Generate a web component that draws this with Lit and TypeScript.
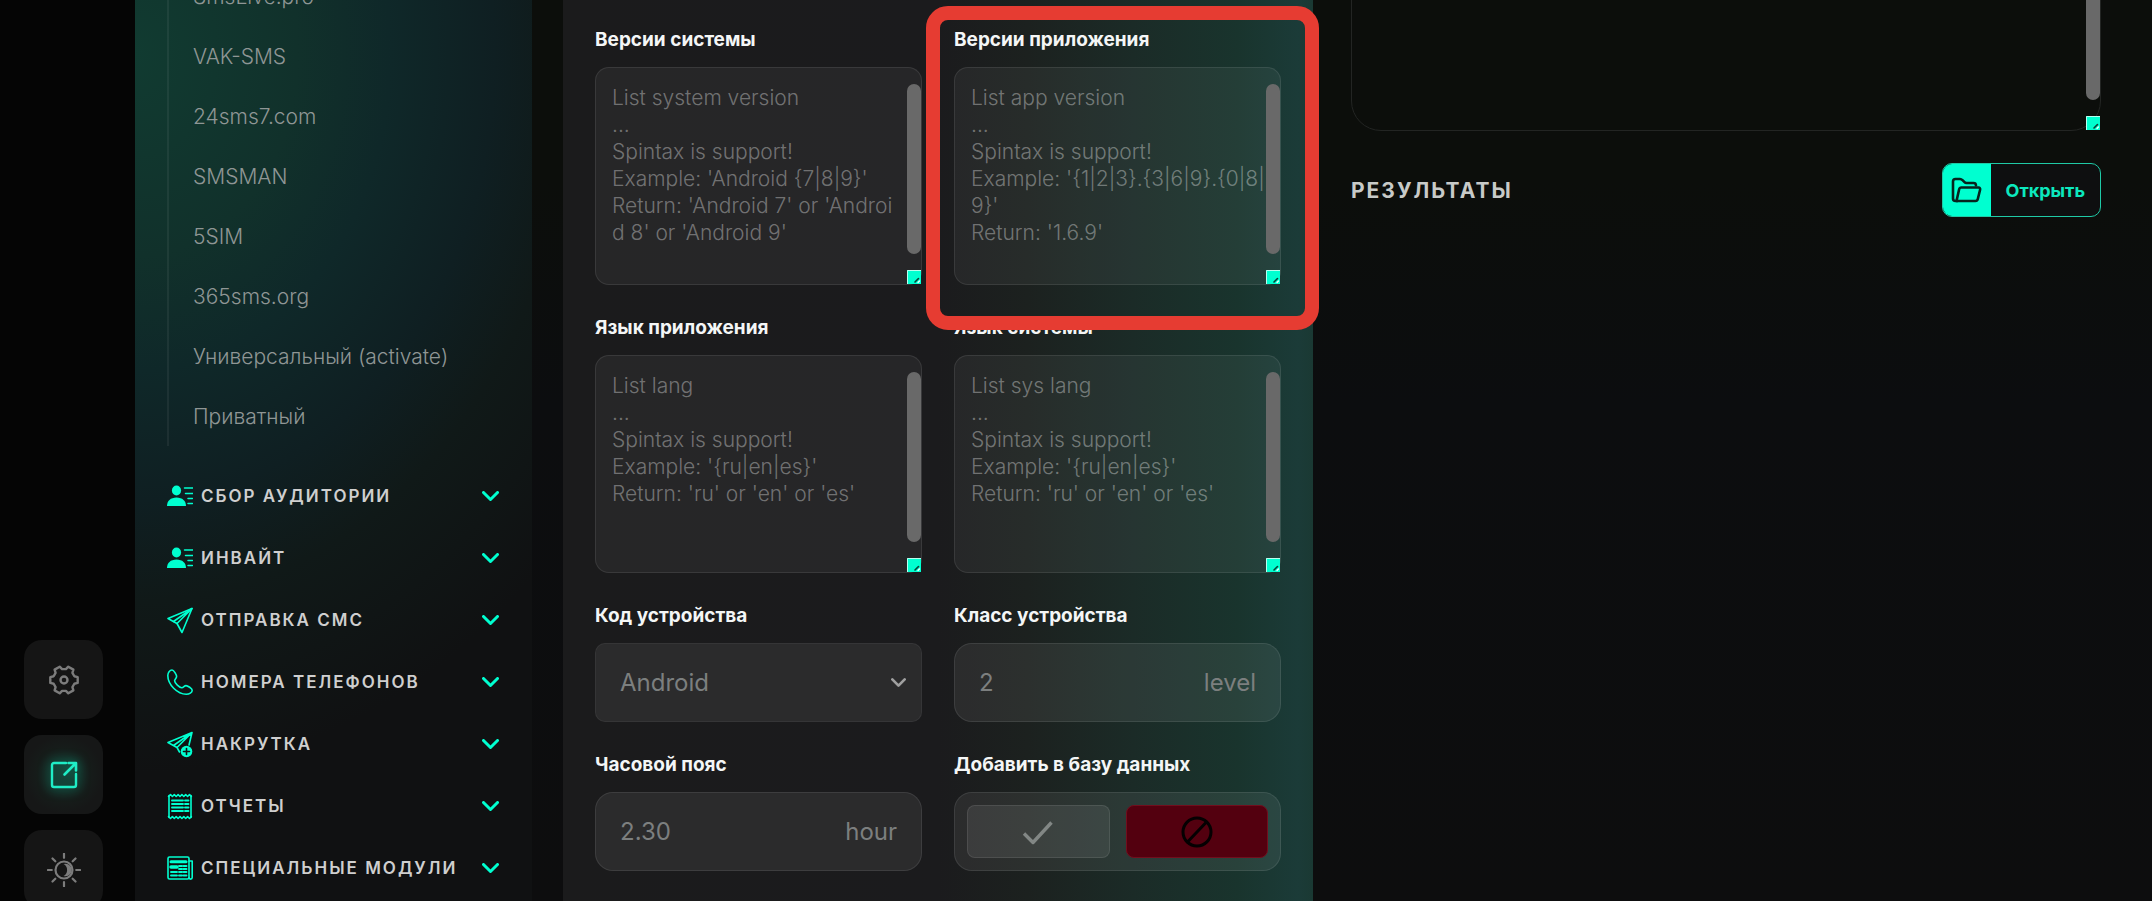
import { LitElement, html, css, svg, nothing } from "lit";
import { customElement, property } from "lit/decorators.js";
import { classMap } from "lit/directives/class-map.js";

const gearPath = (() => {
  const at = (deg: number, r: number) => {
    const a = (deg * Math.PI) / 180;
    return `${(16 + r * Math.cos(a)).toFixed(2)} ${(16 + r * Math.sin(a)).toFixed(2)}`;
  };
  let d = "";
  for (let i = 0; i < 6; i++) {
    const a = i * 60;
    d += `${i ? "L" : "M"}${at(a - 12, 14)}L${at(a + 12, 14)}L${at(a + 20, 11)}L${at(a + 40, 11)}`;
  }
  return d + "Z";
})();

const plane = svg`<path d="M25 1.5 1 11.5l9 5 5 9z"/><path d="M25 1.5 10 16.5M25 1.5 6.500 14.500"/>`;

const icons = {
  contact: svg`<g fill="currentColor" stroke="none"><ellipse cx="9.500" cy="7.500" rx="4.600" ry="5"/><path d="M0 23c0-5 3.500-8.500 9.500-8.500S19 18 19 23z"/></g><path d="M17.500 5H26M18.500 10.500H26M21 15.500h4.500M21 20.500h4.500" stroke-width="1.500"/>`,
  plane,
  phone: svg`<path d="M5 1C2.800 1 .800 3.600.800 6.500c0 9 9.500 18.700 18.500 18.700 3 0 5.900-1.700 5.900-4 0-1.700-4.700-4.600-6.200-4.600-1.700 0-2.500 2.200-4.200 2.200-2.300 0-7.200-4.800-7.200-7 0-1.700 2-2.600 2-4.300C9.600 5.900 6.800 1 5 1z"/>`,
  planePlus: svg`<path d="M25 1.500 1 11.500l9 5 2.500 4.500M25 1.500 22 14M25 1.500 10 16.500M25 1.500 6.500 14.500"/><circle cx="19.500" cy="20.500" r="5.800" fill="currentColor" stroke="none"/><path d="M19.500 17.500v6M16.500 20.500h6" stroke="#101113" stroke-width="1.600"/>`,
  report: svg`<path d="M2 2.500v22M24 2.500v22"/><path d="M1.500 3.500l2-2 1.900 2 1.900-2 1.900 2 1.900-2 1.900 2 1.900-2 1.900 2 1.900-2 1.900 2 1.900-2 1.900 2M1.500 23.500l2 2 1.900-2 1.900 2 1.900-2 1.900 2 1.900-2 1.900 2 1.900-2 1.900 2 1.900-2 1.900 2 1.900-2"/><path d="M5 7.500h11M5 11h11M5 14.500h11M5 18h11M18 7.500h3.500M18 11h3.500M18 14.500h3.500M18 18h3.500" stroke-width="1.900"/>`,
  news: svg`<rect x="1" y="2" width="21" height="22" rx="1.500"/><path d="M22 6h3.200v16.500a1.500 1.500 0 0 1-3.200 0"/><path d="M4 6.800h15" stroke-width="3"/><path d="M4 12h6" stroke-width="3.500"/><path d="M12 11h3M16.500 11h3M12 14h3M16.500 14h3M4 17h6M12 17h3M16.500 17h3M4 20.500h6M12 20.500h3M16.500 20.500h3" stroke-width="1.900"/>`,
  gear: svg`<path d=${gearPath} stroke-width="2.400"/><circle cx="16" cy="16" r="3.500" stroke-width="2.400"/>`,
  external: svg`<path d="M18 4H6a2 2 0 0 0-2 2v20a2 2 0 0 0 2 2h20a2 2 0 0 0 2-2V15" stroke-width="2.400"/><path d="M16.500 15.500 26 6M20.500 4H28v7.500" stroke-width="2.600"/>`,
  sun: svg`<circle cx="17" cy="17" r="8.500" stroke-width="2.200"/><path d="M16.500 11a6.300 6.300 0 1 1 0 12 6.800 6.800 0 0 0 0-12z" fill="currentColor" stroke="none"/><path d="M17 .800v4M17 29.200v4M.800 17h4M29.200 17h4M5.500 5.500l2.800 2.800M25.700 25.700l2.800 2.800M5.500 28.500l2.800-2.800M25.700 8.300l2.800-2.800" stroke-width="2.200"/>`,
  chevron: svg`<path d="M1.500 1.500 8.500 8.500l7-7" stroke-width="3"/>`,
  check: svg`<path d="M2 14.500 11 23.500 29.500 3.500" stroke-width="3.400" stroke-linecap="butt"/>`,
  ban: svg`<circle cx="16" cy="16" r="14" stroke-width="3"/><path d="M6.500 26 25.500 6" stroke-width="3"/>`,
  folder: svg`<path d="M6.500 24H4.500A2.500 2.500 0 0 1 2 21.500V4.500A2.500 2.500 0 0 1 4.500 2H9c1 0 1.800.500 2.500 1.200l2 2c.500.500 1.200.800 2 .800h7a2.500 2.500 0 0 1 2.500 2.300" stroke-width="2.600"/><path d="M10 10.500h17.500c1.300 0 1.900 1 1.600 2.200l-2.300 9.300a2.500 2.500 0 0 1-2.500 2H5.500l2.700-12c.200-.900.900-1.500 1.800-1.500z" stroke-width="2.600"/>`,
  grip: svg`<path d="M.500 14V.500H14" stroke="#b8fff0" stroke-width="1"/><path d="M8 12l3.500-3.500" stroke="#0a3b33" stroke-width="1.600"/><path d="M11 12.500l1.500-1.500" stroke="#fff" stroke-width="1.200"/>`,
};
type IconName = keyof typeof icons;

const icon = (name: IconName, w: number, h: number, cls = "") => html`
  <svg class=${cls} viewBox="0 0 ${w} ${h}" width=${w} height=${h} fill="none" stroke="currentColor"
    stroke-width="1.600" stroke-linecap="round" stroke-linejoin="round" aria-hidden="true">${icons[name]}</svg>`;

const base = css`
  *, *::before, *::after { box-sizing: border-box; }
  svg { display: block; flex: none; }
  button { font: inherit; color: inherit; border: 0; background: none; padding: 0; margin: 0; cursor: pointer; }
`;

@customElement("tool-rail")
class ToolRail extends LitElement {
  static styles = [base, css`
    :host { display: block; background: #050505; }
    .rail { height: calc(100% + 8px); display: flex; flex-direction: column; justify-content: flex-end; gap: 16px; padding: 0 24px; }
    .tool { flex: none; width: 79px; height: 79px; border-radius: 18px; background: #151515; color: #7c7c7c; display: grid; place-items: center; }
    .active { color: #1fedc6; background: radial-gradient(circle, #16382f 0, #161c1a 48%, #161717 70%); }
    .active svg { filter: drop-shadow(0 0 6px rgb(0 255 200 / 55%)); }
  `];
  render() {
    return html`<nav class="rail" aria-label="Инструменты">
      <button class="tool" aria-label="Настройки">${icon("gear", 32, 32)}</button>
      <button class="tool active" aria-label="Открыть в окне">${icon("external", 32, 32)}</button>
      <button class="tool" aria-label="Тема">${icon("sun", 34, 34)}</button>
    </nav>`;
  }
}

@customElement("side-menu")
class SideMenu extends LitElement {
  static styles = [base, css`
    :host { display: block; overflow: hidden; padding: 0 33px 0 32px;
      background: radial-gradient(ellipse 580px 720px at 0 6%, #113b31 0, #11312b 28%, #0f2829 44%, #0f1f22 62%, #101918 76%, #101112 100%) #101112; }
    ul { list-style: none; margin: 0; padding: 0; }
    .services { margin: -34px 0 19px; border-left: 2px solid rgb(255 255 255 / 6%); }
    .service { display: flex; align-items: center; height: 60px; padding-left: 24px; font-weight: 300; font-size: 21px; color: #8f9695; text-decoration: none; white-space: nowrap; }
    .group { width: 100%; height: 62px; display: flex; align-items: center; gap: 8px; color: #00ffd0; text-align: left; }
    .title { flex: 1; font-size: 17px; font-weight: 600; letter-spacing: 2px; color: #cfcfcf; white-space: nowrap; }
  `];
  services = ["SmsLive.pro", "VAK-SMS", "24sms7.com", "SMSMAN", "5SIM", "365sms.org", "Универсальный (activate)", "Приватный"];
  groups: [IconName, string][] = [
    ["contact", "СБОР АУДИТОРИИ"], ["contact", "ИНВАЙТ"], ["plane", "ОТПРАВКА СМС"], ["phone", "НОМЕРА ТЕЛЕФОНОВ"],
    ["planePlus", "НАКРУТКА"], ["report", "ОТЧЕТЫ"], ["news", "СПЕЦИАЛЬНЫЕ МОДУЛИ"],
  ];
  render() {
    return html`
      <ul class="services">${this.services.map(s => html`<li><a class="service" href="#">${s}</a></li>`)}</ul>
      <ul>${this.groups.map(([i, t]) => html`<li><button class="group" aria-expanded="false">
        ${icon(i, 26, 27)}<span class="title">${t}</span>${icon("chevron", 17, 10)}</button></li>`)}</ul>`;
  }
}

@customElement("list-field")
class ListField extends LitElement {
  static styles = [base, css`
    :host { display: grid; gap: 15px; position: relative; }
    label { font-size: 19px; line-height: 24px; font-weight: 700; color: #f4f6f6; white-space: nowrap; }
    .box { position: relative; display: grid; }
    textarea { font: inherit; font-size: 21px; font-weight: 300; line-height: 27px; height: 218px; width: 100%; margin: 0;
      padding: 16px 14px 16px 16px; resize: none; overflow: hidden; word-break: break-all; outline: 0; color: #ddd;
      border: 1px solid rgb(255 255 255 / 9%); border-radius: 14px; background: rgb(255 255 255 / 5%); }
    textarea::placeholder { color: rgb(255 255 255 / 36%); opacity: 1; }
    .thumb { position: absolute; right: 1px; top: 17px; bottom: 31px; width: 14px; border-radius: 7px; background: #696969; }
    .corner { position: absolute; right: 1px; bottom: 1px; background: #00ffd0; }
    .marked::after { content: ""; position: absolute; z-index: 2; inset: -22px -38px -45px -28px; border: 14px solid #e63c32; border-radius: 22px; pointer-events: none; }
    .marked { display: contents; }
    .tall textarea { height: 171px; border-radius: 30px; background: #0c0e0b; border-color: #232523; }
  `];
  @property() label = "";
  @property() hint = "";
  @property({ type: Boolean }) marked = false;
  @property({ type: Boolean }) tall = false;
  render() {
    return html`
      ${this.label ? html`<label for="t">${this.label}</label>` : nothing}
      <div class=${classMap({ box: true, tall: this.tall })}>
        <textarea id="t" aria-label=${this.label || "Журнал"} placeholder=${this.hint}></textarea>
        <span class="thumb"></span>${icon("grip", 14, 14, "corner")}
      </div>
      ${this.marked ? html`<span class="marked"></span>` : nothing}`;
  }
}

@customElement("device-form")
class DeviceForm extends LitElement {
  static styles = [base, css`
    :host { display: grid; grid-template-columns: 1fr 1fr; gap: 31px 32px; align-content: start; padding: 28px 32px;
      background: linear-gradient(to right, #1b1b1c 0, #1b1b1d 50%, #1c211f 62%, #1b2b27 76%, #19342d 90%, #1b3b38 98%, #1a3933 100%); }
    .field { display: grid; gap: 15px; min-width: 0; }
    .label { font-size: 19px; line-height: 24px; font-weight: 700; color: #f4f6f6; white-space: nowrap; }
    .control { display: flex; align-items: center; height: 79px; padding: 0 24px; font-size: 24px; color: #7c7f7f;
      border: 1px solid rgb(255 255 255 / 9%); border-radius: 18px; background: rgb(255 255 255 / 7%); }
    .picker { border-radius: 10px; border-color: rgb(255 255 255 / 5%); padding: 0 15px 0 24px; }
    input, select { font: inherit; color: inherit; flex: 1; min-width: 0; width: 0; border: 0; outline: 0; background: none; padding: 0; margin: 0; appearance: none; }
    select { align-self: stretch; }
    input::placeholder { color: inherit; opacity: 1; }
    .arrow { width: 15px; height: 9px; color: #a0a0a0; pointer-events: none; }
    .choices { display: grid; grid-template-columns: 1fr 1fr; gap: 16px; padding: 12px; }
    .choice { height: 53px; border-radius: 8px; border: 1px solid rgb(255 255 255 / 9%); background: rgb(255 255 255 / 8%); color: #828785; display: grid; place-items: center; }
    .no { background: #53000f; border-color: #720e1d; color: #050002; }
  `];
  render() {
    const spin = "...\nSpintax is support!\n";
    const lang = `${spin}Example: '{ru|en|es}'\nReturn: 'ru' or 'en' or 'es'`;
    return html`
      <list-field label="Версии системы" .hint=${`List system version\n${spin}Example: 'Android {7|8|9}'\nReturn: 'Android 7' or 'Androi\nd 8' or 'Android 9'`}></list-field>
      <list-field marked label="Версии приложения" .hint=${`List app version\n${spin}Example: '{1|2|3}.{3|6|9}.{0|8|\n9}'\nReturn: '1.6.9'`}></list-field>
      <list-field label="Язык приложения" .hint=${`List lang\n${lang}`}></list-field>
      <list-field label="Язык системы" .hint=${`List sys lang\n${lang}`}></list-field>
      <div class="field"><label class="label" for="code">Код устройства</label>
        <div class="control picker"><select id="code"><option>Android</option></select>${icon("chevron", 17, 10, "arrow")}</div></div>
      <div class="field"><label class="label" for="level">Класс устройства</label>
        <div class="control"><input id="level" placeholder="2"><span>level</span></div></div>
      <div class="field"><label class="label" for="zone">Часовой пояс</label>
        <div class="control"><input id="zone" placeholder="2.30"><span>hour</span></div></div>
      <div class="field" role="group" aria-labelledby="db"><span class="label" id="db">Добавить в базу данных</span>
        <div class="control choices">
          <button class="choice" aria-label="Да">${icon("check", 32, 26)}</button>
          <button class="choice no" aria-label="Нет">${icon("ban", 32, 32)}</button>
        </div></div>`;
  }
}

@customElement("results-panel")
class ResultsPanel extends LitElement {
  static styles = [base, css`
    :host { display: block; }
    .log { margin-top: -40px; }
    .head { display: flex; align-items: center; justify-content: space-between; margin-top: 32px; }
    h2 { margin: 0; font-size: 21px; font-weight: 700; letter-spacing: 2px; color: #c8cac8; }
    .open { display: flex; height: 54px; border: 1px solid #1fc9a6; border-radius: 10px; overflow: hidden; background: #0e0f10; }
    .badge { width: 48px; display: grid; place-items: center; background: #00ffd0; color: #06231d; }
    .text { align-self: center; padding: 0 15px; font-size: 18px; font-weight: 700; color: #0ce8be; }
  `];
  render() {
    return html`<list-field class="log" tall></list-field>
      <div class="head"><h2>РЕЗУЛЬТАТЫ</h2>
        <button class="open"><span class="badge">${icon("folder", 31, 26)}</span><span class="text">Открыть</span></button></div>`;
  }
}

@customElement("app-root")
class AppRoot extends LitElement {
  static styles = [base, css`
    :host { display: grid; grid-template-columns: 135px 397px 1fr; height: 100vh; overflow: hidden;
      font-family: Inter, "Open Sans", sans-serif; background: linear-gradient(#0c0e0b 20%, #0c0d0f 45%, #0d0d0e); }
    main { display: grid; grid-template-columns: 1fr 1fr; gap: 38px; padding: 0 51px 0 31px; min-width: 0; }
  `];
  render() {
    return html`<tool-rail></tool-rail><side-menu></side-menu>
      <main><device-form></device-form><results-panel></results-panel></main>`;
  }
}
